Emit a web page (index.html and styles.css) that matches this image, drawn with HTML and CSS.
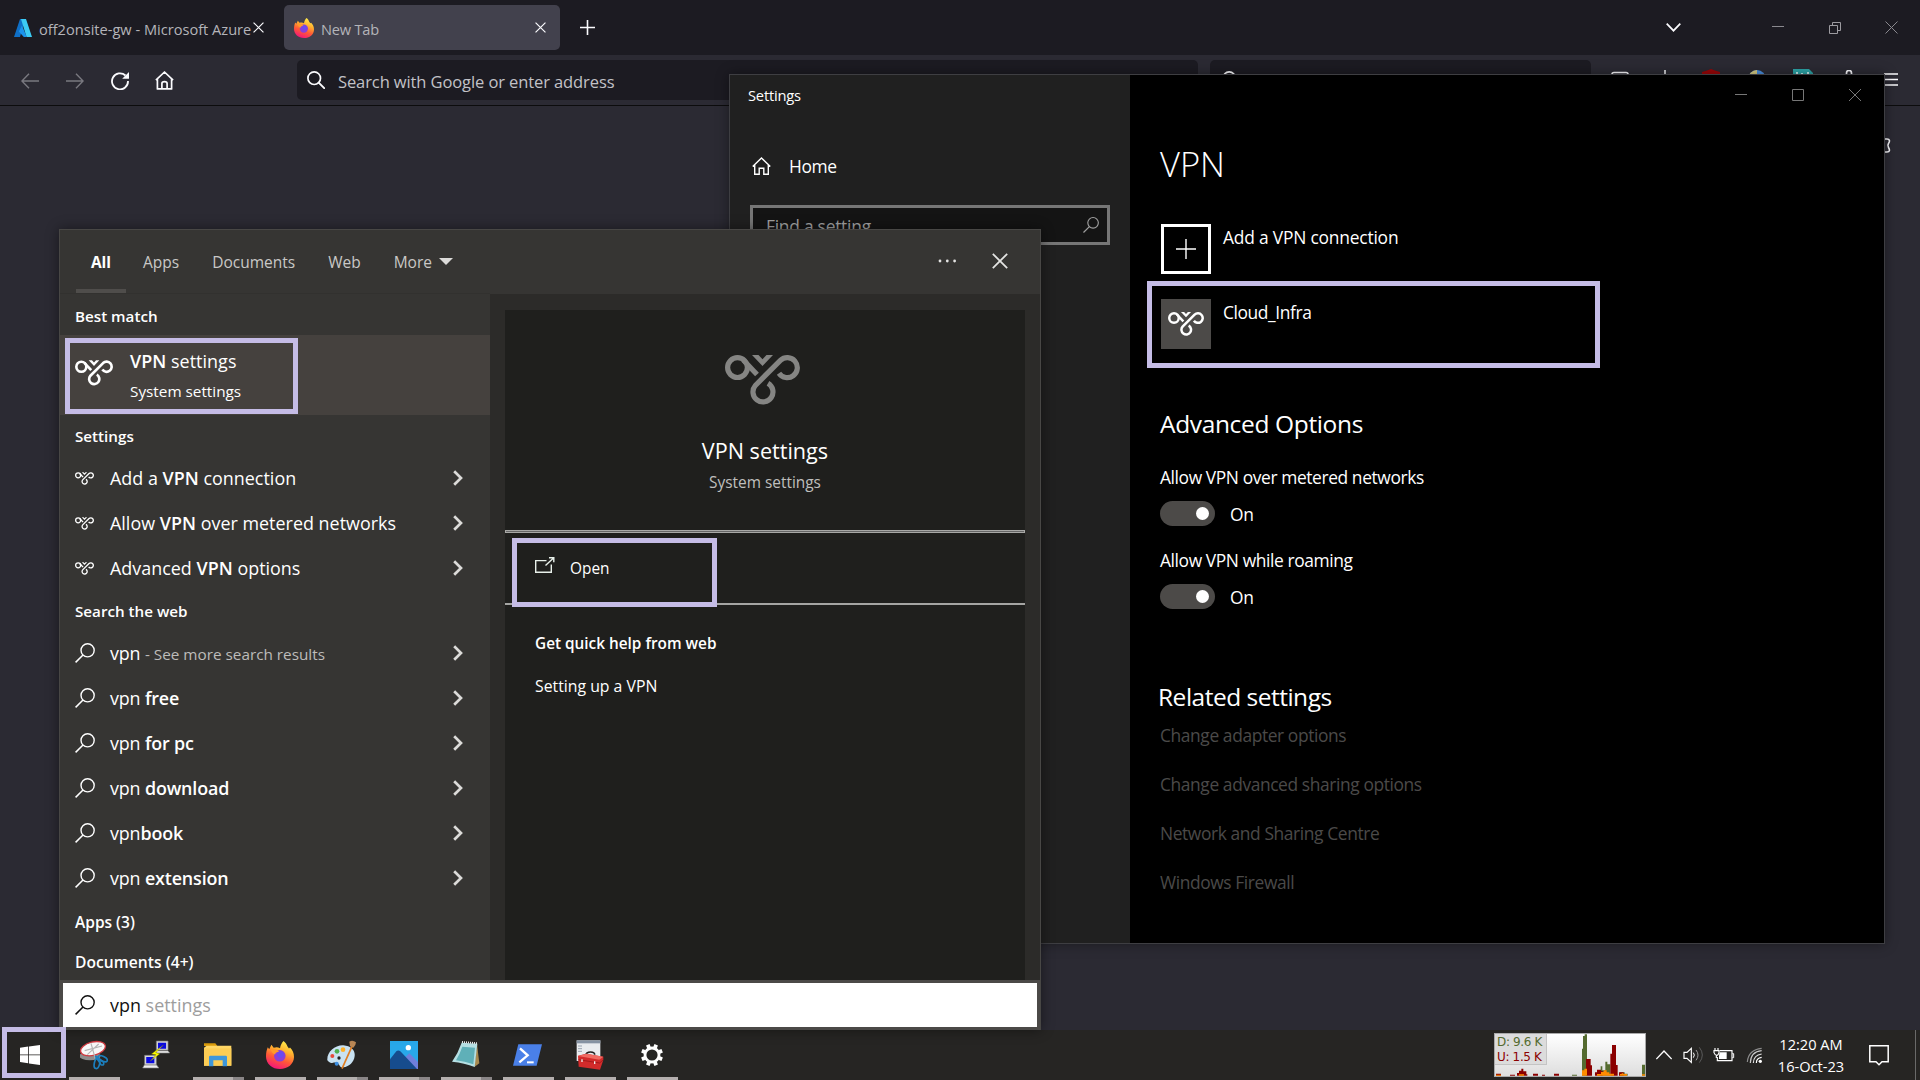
FILE: index.html
```html
<!DOCTYPE html>
<html lang="en">
<head>
<meta charset="utf-8">
<title>Desktop</title>
<link rel="stylesheet" href="styles.css">
</head>
<body>
<svg class="defs" aria-hidden="true">
  <symbol id="vpn" viewBox="0 0 75 50">
    <g fill="none" stroke="currentColor" stroke-width="5.2">
      <circle cx="12.5" cy="12.6" r="9.9"/>
      <path d="M18.5 5.2 32 19.500"/>
      <path d="M54 18.2A10 10 0 1 0 55.4 5.4L30.4 30.4A10 10 0 1 0 43 28.300"/>
    </g>
    <path fill="currentColor" d="M27 0h6.500l4 4.300 4-4.300H48L37.500 11z"/>
  </symbol>
  <symbol id="search" viewBox="0 0 20 20">
    <circle cx="12.600" cy="7.300" r="6.600" fill="none" stroke="currentColor" stroke-width="1.400"/>
    <path d="M8 12 .6 19.400" fill="none" stroke="currentColor" stroke-width="1.500"/>
  </symbol>
  <symbol id="chev" viewBox="0 0 10 16">
    <path d="M1.200 1.200 8 8l-6.800 6.800" fill="none" stroke="currentColor" stroke-width="2.700"/>
  </symbol>
  <symbol id="close" viewBox="0 0 12 12">
    <path d="M.6.6l10.800 10.800M11.400.6.6 11.400" fill="none" stroke="currentColor" stroke-width="1.300"/>
  </symbol>
  <symbol id="glass" viewBox="0 0 18 18">
    <circle cx="7.200" cy="7.200" r="6.300" fill="none" stroke="currentColor" stroke-width="1.700"/>
    <path d="m11.700 11.700 5.500 5.500" stroke="currentColor" stroke-width="1.900" stroke-linecap="round"/>
  </symbol>
  <linearGradient id="fxg" x1=".75" y1="0" x2=".35" y2="1">
    <stop offset="0" stop-color="#fff44f"/><stop offset=".35" stop-color="#ffb02e"/>
    <stop offset=".65" stop-color="#ff5a36"/><stop offset="1" stop-color="#f4157a"/>
  </linearGradient>
  <symbol id="firefox" viewBox="0 0 28 28">
    <path fill="url(#fxg)" d="M17.500 0c2 1.500 3.300 3.500 4 5.600l1.500 1.800 1-.8c2.600 2.700 4 5.800 4 9.400C28 23 21.800 28 14 28S0 22.600 0 15.400c0-3.800.7-6.800 1.800-9.200l1.400 2L5.400 3.700l2.300 3.100C10 6 12 6 14 7.200c.6-3 1.600-5.400 3.500-7.200z"/>
    <circle cx="13.800" cy="14.800" r="5.800" fill="#8b3fd8"/>
    <path fill="#ff9a2a" d="M4.500 8.500c3.500-1 6.500 0 8.700 2.200-2.300 0-3.700 1-4.200 2.800L6.500 12z"/>
    <circle cx="14.600" cy="13.500" r="3.200" fill="#6a4bf0"/>
  </symbol>
</svg>

<div class="desktop">
  <!-- Browser -->
  <section class="browser">
    <div class="tabs">
      <div class="tab">
        <svg width="18" height="18" viewBox="0 0 18 18"><path fill="#0f6fc6" d="M6 0h5L6 18H0z"/><path fill="#3ccbf4" d="M7 0h5l6 18h-5.500z"/><path fill="#1b93eb" d="M8 6.500 4.800 12.500l5 5.500h3z"/></svg>
        <span class="tab-title first">off2onsite-gw - Microsoft Azure</span>
        <svg class="x1" width="11" height="11"><use href="#close"/></svg>
      </div>
      <div class="tab active">
        <svg width="20" height="20"><use href="#firefox"/></svg>
        <span class="tab-title">New Tab</span>
        <svg class="x2" width="11" height="11"><use href="#close"/></svg>
      </div>
      <svg class="newtab" width="15" height="15" viewBox="0 0 15 15"><path d="M7.500 0v15M0 7.500h15" stroke="#fbfbfe" stroke-width="1.600"/></svg>
      <div class="winctl">
        <svg width="15" height="9" viewBox="0 0 15 9"><path d="M.7.700l6.800 7 6.800-7" fill="none" stroke="#fbfbfe" stroke-width="1.700"/></svg>
        <svg class="c-min" width="12" height="12" viewBox="0 0 12 12"><path d="M0 4.500h12" stroke="#8a898f"/></svg>
        <svg class="c-max" width="12" height="12" viewBox="0 0 12 12"><path d="M.5 3.500h8v8h-8zM3.500 3.500v-3h8v8h-3" fill="none" stroke="#9c9ba0"/></svg>
        <svg class="c-x" width="13" height="13" viewBox="0 0 13 13"><path d="M.5.500l12 12M12.500.500l-12 12" stroke="#8a898f"/></svg>
      </div>
    </div>
    <div class="toolbar">
      <svg class="dim" width="18" height="16" viewBox="0 0 18 16"><path d="M18 8H1M8 .8.900 8 8 15.200" fill="none" stroke="currentColor" stroke-width="1.400"/></svg>
      <svg class="dim t-fwd" width="18" height="16" viewBox="0 0 18 16"><path d="M0 8h17M10 .8 17.100 8 10 15.200" fill="none" stroke="currentColor" stroke-width="1.400"/></svg>
      <svg class="t-rel" width="18" height="18" viewBox="0 0 18 18"><path d="M14.500 3.500A8 8 0 1 0 17 9" fill="none" stroke="currentColor" stroke-width="1.800"/><path d="M18 0v6.800h-6.800z" fill="currentColor"/></svg>
      <svg class="t-home" width="19" height="19" viewBox="0 0 19 19"><path d="M.9 9.200 9.500 1l8.600 8.200M2.400 8v9.900h14.200V8M6.900 17.500v-5c0-2.400 5.200-2.400 5.200 0v5" fill="none" stroke="currentColor" stroke-width="1.700" stroke-linejoin="round"/></svg>
      <div class="url"><svg width="18" height="18"><use href="#glass"/></svg><span>Search with Google or enter address</span></div>
      <div class="sbar"><svg width="18" height="18"><use href="#glass"/></svg></div>
      <div class="exts">
        <svg width="18" height="18" viewBox="0 0 18 18"><rect x="1" y="2.500" width="16" height="12" rx="2" fill="none" stroke="#fbfbfe" stroke-width="1.700"/></svg>
        <svg width="18" height="18" viewBox="0 0 18 18"><path d="M9 0v14M3 9l6 6 6-6" fill="none" stroke="#fbfbfe" stroke-width="1.500"/></svg>
        <svg width="20" height="20" viewBox="0 0 20 20"><path d="M10 0l4 1.600L19 3v9l-9 8-9-8V3l5-1.400z" fill="#9a0508"/></svg>
        <svg width="18" height="18" viewBox="0 0 18 18"><circle cx="9" cy="9" r="9" fill="#4a90e2"/><path d="M9 0v9H0A9 9 0 0 1 9 0z" fill="#d9cf86"/></svg>
        <svg width="20" height="20" viewBox="0 0 20 20"><path d="M0 0h16l4 4v16H0z" fill="#2da5a8"/><path d="M4 3v3M9 4v2M15 3v3" stroke="#e8ffff" stroke-width="1.600"/></svg>
        <svg width="18" height="18" viewBox="0 0 18 18"><path d="M6.500 6V3a2.500 2.500 0 0 1 5 0v3" fill="none" stroke="#fbfbfe" stroke-width="1.700"/></svg>
        <svg class="burger" width="14" height="13" viewBox="0 0 14 13"><path d="M0 1h14M0 6.500h14M0 12h14" stroke="#fbfbfe" stroke-width="1.600"/></svg>
      </div>
    </div>
    <div class="page">
      <svg width="22" height="15" viewBox="0 0 22 15"><path d="M10 1h8c3 0 3 2.500 1.500 4.500-1 1.500-1 2.500 0 4C21 12 21 14 18 14h-8" fill="none" stroke="#fbfbfe" stroke-width="1.600"/></svg>
    </div>
  </section>

  <!-- Settings window -->
  <section class="settings">
    <aside class="s-nav">
      <div class="s-title">Settings</div>
      <div class="s-home"><svg width="19" height="18" viewBox="0 0 19 18"><path d="M.7 9.500 9.500 1l8.800 8.500M2.700 8v9.300h4.500v-6h4.600v6h4.500V8" fill="none" stroke="#fff" stroke-width="1.400"/></svg><span>Home</span></div>
      <div class="s-find"><span>Find a setting</span><svg width="16" height="16"><use href="#search"/></svg></div>
    </aside>
    <div class="s-main">
      <div class="s-ctl">
        <svg width="12" height="12" viewBox="0 0 12 12"><path d="M0 5.500h12" stroke="#777"/></svg>
        <svg width="12" height="12" viewBox="0 0 12 12"><path d="M.5.500h11v11H.5z" fill="none" stroke="#777"/></svg>
        <svg width="12" height="12" viewBox="0 0 12 12"><path d="M0 0l12 12M12 0 0 12" stroke="#777"/></svg>
      </div>
      <h1>VPN</h1>
      <div class="conn add"><div class="box"><svg width="20" height="20" viewBox="0 0 20 20"><path d="M10 0v20M0 10h20" stroke="#fff" stroke-width="1.400"/></svg></div><span>Add a VPN connection</span></div>
      <div class="conn cloud"><div class="box"><svg width="36" height="24"><use href="#vpn"/></svg></div><span>Cloud_Infra</span><i class="mark"></i></div>
      <h2>Advanced Options</h2>
      <div class="opt"><p>Allow VPN over metered networks</p><div class="sw"><b></b><span>On</span></div></div>
      <div class="opt"><p>Allow VPN while roaming</p><div class="sw"><b></b><span>On</span></div></div>
      <h2 class="rel">Related settings</h2>
      <ul class="links"><li>Change adapter options</li><li>Change advanced sharing options</li><li>Network and Sharing Centre</li><li>Windows Firewall</li></ul>
    </div>
  </section>

  <!-- Start search -->
  <section class="start">
    <header class="st-head">
      <div class="st-tab on">All</div><div class="st-tab">Apps</div><div class="st-tab">Documents</div><div class="st-tab">Web</div><div class="st-tab more">More <i></i></div>
      <div class="st-act">
        <svg width="19" height="4" viewBox="0 0 19 4"><g fill="#e4e4e3"><circle cx="2" cy="2" r="1.400"/><circle cx="9.300" cy="2" r="1.400"/><circle cx="16.600" cy="2" r="1.400"/></g></svg>
        <svg width="16" height="16"><use href="#close"/></svg>
      </div>
    </header>
    <div class="st-body">
      <div class="results">
        <h3 class="h-best">Best match</h3>
        <div class="best">
          <svg width="38" height="26"><use href="#vpn"/></svg>
          <div><p><b>VPN</b> settings</p><small>System settings</small></div>
          <i class="mark"></i>
        </div>
        <h3 class="h-set">Settings</h3>
        <div class="row"><svg class="v" width="19" height="13"><use href="#vpn"/></svg><span>Add a <b>VPN</b> connection</span><svg class="ch" width="10" height="16"><use href="#chev"/></svg></div>
        <div class="row"><svg class="v" width="19" height="13"><use href="#vpn"/></svg><span>Allow <b>VPN</b> over metered networks</span><svg class="ch" width="10" height="16"><use href="#chev"/></svg></div>
        <div class="row"><svg class="v" width="19" height="13"><use href="#vpn"/></svg><span>Advanced <b>VPN</b> options</span><svg class="ch" width="10" height="16"><use href="#chev"/></svg></div>
        <h3 class="h-web">Search the web</h3>
        <div class="row web first"><svg width="20" height="20"><use href="#search"/></svg><span>vpn <small>- See more search results</small></span><svg class="ch" width="10" height="16"><use href="#chev"/></svg></div>
        <div class="row web"><svg width="20" height="20"><use href="#search"/></svg><span>vpn <b>free</b></span><svg class="ch" width="10" height="16"><use href="#chev"/></svg></div>
        <div class="row web"><svg width="20" height="20"><use href="#search"/></svg><span>vpn <b>for pc</b></span><svg class="ch" width="10" height="16"><use href="#chev"/></svg></div>
        <div class="row web"><svg width="20" height="20"><use href="#search"/></svg><span>vpn <b>download</b></span><svg class="ch" width="10" height="16"><use href="#chev"/></svg></div>
        <div class="row web"><svg width="20" height="20"><use href="#search"/></svg><span>vpn<b>book</b></span><svg class="ch" width="10" height="16"><use href="#chev"/></svg></div>
        <div class="row web"><svg width="20" height="20"><use href="#search"/></svg><span>vpn <b>extension</b></span><svg class="ch" width="10" height="16"><use href="#chev"/></svg></div>
        <h3 class="h-apps">Apps (3)</h3>
        <h3 class="h-docs">Documents (4+)</h3>
      </div>
      <div class="detail">
        <div class="hero"><svg width="75" height="50"><use href="#vpn"/></svg><p>VPN settings</p><small>System settings</small></div>
        <div class="dbl"></div>
        <div class="open">
          <svg width="20" height="16" viewBox="0 0 20 16"><path d="M11.500 3.600H.7v11.700h15.600V7.500M10.500 8.500l7.800-7.300M14 .7h4.800v4.500" fill="none" stroke="#e8f0ea" stroke-width="1.400"/></svg><span>Open</span>
          <i class="mark"></i>
        </div>
        <h4>Get quick help from web</h4>
        <p class="help">Setting up a VPN</p>
      </div>
    </div>
    <div class="st-search"><svg width="20" height="20"><use href="#search"/></svg><span>vpn <em>settings</em></span></div>
  </section>

  <!-- Taskbar -->
  <footer class="taskbar">
    <div class="winbtn">
      <svg width="20" height="20" viewBox="0 0 20 20"><path fill="#fff" d="M0 2.800 8.200 1.600V9.500H0zM9 1.500 20 0v9.500H9zM0 10.300h8.200v8L0 17.100zM9 10.300h11V20L9 18.400z"/></svg>
      <i class="mark"></i>
    </div>
    <div class="apps">
      <div class="app run"><svg width="28" height="30" viewBox="30 18 84 90"><ellipse cx="60" cy="66" rx="32" ry="13" fill="#8d8d8d"/><ellipse cx="69" cy="44" rx="38" ry="20" transform="rotate(-14 69 44)" fill="#f8f8f8" stroke="#cf3a40" stroke-width="4"/><path d="M44 50 96 36M63 28l14 50M52 62l34-32" stroke="#b5b5b5" stroke-width="3.500"/><g fill="none" stroke="#1c7fbd" stroke-width="5"><ellipse cx="98" cy="74" rx="15" ry="7" transform="rotate(25 98 74)"/><ellipse cx="81" cy="88" rx="8" ry="16" transform="rotate(12 81 88)"/><path d="M76 66l17 26q10 4 8-7z"/></g></svg></div>
      <div class="app"><svg width="28" height="30" viewBox="214 18 86 90"><g fill="#d8d8d8" stroke="#777" stroke-width="2"><path d="M258 20h36v28h-36zM222 64h36v30h-36z"/><path d="M256 50h38l5 7h-41zM221 94h38l7 9h-50z" fill="#f0f0f0"/></g><path d="M263 25h25v19h-25zM227 69h25v19h-25z" fill="#0a0ae0"/><path d="M280 32 243 60l14 2-18 20 30-23-13-3z" fill="#ffff00" stroke="#777700"/></svg></div>
      <div class="app run multi"><svg width="28" height="30" viewBox="402 20 84 84"><path d="M402 27h34l6 8h-40z" fill="#d99b0c"/><path d="M402 40l8-6h74v60h-82z" fill="#ffd766"/><path d="M402 42h82v52h-82z" fill="#fccd55"/><path d="M417 96V68q0-4 4-4h46q4 0 4 4v28h-13V78h-28v18z" fill="#3f97da"/></svg></div>
      <div class="app run"><svg width="28" height="28"><use href="#firefox"/></svg></div>
      <div class="app run multi"><svg width="30" height="30" viewBox="771 18 90 88"><path d="M772 78c-2-24 22-46 48-45 24 2 36 16 34 32-2 18-16 32-34 34-12 2-10-10-20-14-12-4-16 8-28-7z" fill="#c9e2f2"/><circle cx="801" cy="51" r="7" fill="#4db04f"/><circle cx="819" cy="46" r="7" fill="#ffb22c"/><circle cx="787" cy="65" r="6" fill="#e64b3c"/><circle cx="800" cy="88" r="6" fill="#3a8de0"/><circle cx="807" cy="71" r="5" fill="#222"/><path d="M846 36 816 103" stroke="#e07d22" stroke-width="5"/><path d="M838 22q10-6 20 2 0 8-8 16l-10-4z" fill="#b98755"/></svg></div>
      <div class="app run multi"><svg width="28" height="28" viewBox="960 21 84 84"><path d="M960 21h84v84h-84z" fill="#28a8ea"/><path d="M990 85l28-27 26 26v21h-54z" fill="#6f7fdb"/><path d="M960 76l19-24q6-5 12 0l50 53h-81z" fill="#164c8d"/><circle cx="1015" cy="41" r="8" fill="#fff"/></svg></div>
      <div class="app run multi"><svg width="28" height="28" viewBox="333 63 84 84"><path d="M408 72l7 58-16 12z" fill="#a88a50"/><path d="M362 68l47 3-8 70q-30-12-68-16 18-25 29-57z" fill="#b5dfe3"/><path d="M364 80l38 3-5 50q-26-9-52-12 12-20 19-41z" fill="#5fb0b8"/><path d="M363 66l46 4" stroke="#eee" stroke-width="6" stroke-dasharray="3 3"/></svg></div>
      <div class="app run"><svg width="29" height="22" viewBox="520 71 87 66"><path d="M536 72h71l-16 64h-71z" fill="#4a80e8"/><path d="M541 84l23 21-25 21" fill="none" stroke="#fff" stroke-width="7"/><path d="M562 126h20" stroke="#fff" stroke-width="6"/></svg></div>
      <div class="app run"><svg width="28" height="30" viewBox="704 60 84 90"><path d="M706 61h71v62h-71z" fill="#e9ecef"/><path d="M706 61h71v9h-71z" fill="#8794a4"/><path d="M710 78h12M710 86h12M710 94h12" stroke="#9aa4b0" stroke-width="3"/><path d="M734 106q0-10 14-10 12 0 12 8" fill="none" stroke="#222" stroke-width="5"/><path d="M710 107l24-6 52 9v10l-10 29-64-9z" fill="#d22b2b"/><path d="M710 108l64 11 12-9-50-9z" fill="#f06a62"/><path d="M711 119l64 10 10-9" fill="none" stroke="#8d1212" stroke-width="2"/><path d="M722 118v8M760 124v8" stroke="#eee" stroke-width="4"/></svg></div>
      <div class="app run"><svg width="24" height="24" viewBox="-12 -12 24 24"><circle r="7" fill="none" stroke="#fff" stroke-width="2.800"/><g stroke="#fff" stroke-width="3.800"><path d="M0-7.500V-11M0 7.500V11M7.500 0H11M-7.500 0H-11" transform="rotate(22.500)"/><path d="M0-7.500V-11M0 7.500V11M7.500 0H11M-7.500 0H-11" transform="rotate(67.500)"/></g></svg></div>
    </div>
    <div class="traffic">
      <svg width="150" height="42" viewBox="45 28 450 126">
        <path fill="#556b2f" d="M306 153V72h3V34h5v-5h7v124zM362 153v-28h5v12h9v-26h6v8h9v34zM486 153v-33h9v33zM276 153v-3h15v3zM420 153v-10h14v4h9v6z"/>
        <path fill="#8b0000" d="M318 153v-50h14v19h4v31zM391 153V87h5V61h12v60h5v32zM48 153v-6h15v6zM90 153v-3h15v3zM111 153v-8h6v-7h7v-6h6v8h9v9h3v4zM159 153v-6h15v6zM186 153v-3h9v3zM222 153v-6h15v6zM345 153v-10h6v-8h12v4h5v14zM417 153v-10h14v10z"/>
        <path fill="#ff8c00" d="M48 153v-3h15v3zM117 153v-4h15v4zM306 153v-16h7v-5h8v21zM351 153v-5h12v-6h8v-5h9v6h8v4h14v6zM420 153v-5h5v-2h5v2h11v5zM486 153v-4h9v4z"/>
      </svg>
      <div class="rates"><span class="dn">D: 9.6 K</span><span class="up">U: 1.5 K</span></div>
    </div>
    <div class="tray">
      <svg width="16" height="12" viewBox="528 72 48 36"><path d="M529 102l23-24 23 24" fill="none" stroke="#fff" stroke-width="4"/></svg>
      <svg class="vol" width="22" height="18" viewBox="610 63 66 54"><path d="M613 82h9l13-12v42l-13-12h-9z" fill="none" stroke="#fff" stroke-width="3.500"/><path d="M641 83q6 7 0 15" fill="none" stroke="#fff" stroke-width="3"/><path d="M649 75q12 15 0 31" fill="none" stroke="#999" stroke-width="3"/><path d="M659 67q18 23 0 46" fill="none" stroke="#5a5a5a" stroke-width="3"/></svg>
      <svg class="bat" width="22" height="16" viewBox="700 66 66 48"><path d="M720 77h37v30h-44V96" fill="none" stroke="#fff" stroke-width="3.500"/><path d="M758 86h4v12h-4" fill="none" stroke="#fff" stroke-width="3"/><path d="M720 82h21v20h-23V92z" fill="#fff"/><path d="M703 77h15v6q-2 8-7 8t-8-8zM706 69v8M715 69v8M710 91v8" fill="none" stroke="#fff" stroke-width="3.500"/></svg>
      <svg class="wifi" width="17" height="17" viewBox="798 66 51 51"><circle cx="841" cy="109" r="5" fill="#fff"/><g fill="none" stroke-width="3.500"><path d="M829 114q0-15 16-17" stroke="#fff"/><path d="M820 114q1-24 25-27" stroke="#e0e0e0"/><path d="M811 114q1-34 34-37" stroke="#ccc"/><path d="M802 111q3-37 43-41" stroke="#8c8c8c"/></g></svg>
      <div class="clock"><span>12:20 AM</span><span>16-Oct-23</span></div>
      <svg class="note" width="20" height="21" viewBox="0 0 20 21"><path d="M.8.800h18.400v16H13l-3 3-3-3H.8z" fill="none" stroke="#fff" stroke-width="1.500"/></svg>
      <i class="peek"></i>
    </div>
  </footer>
</div>
</body>
</html>
```

FILE: styles.css
```css
* { box-sizing: border-box; }
body {
  margin: 0;
  overflow: hidden;
  font-family: "Open Sans", "Noto Sans", sans-serif;
  color: #fff;
}
h1, h2, h3, h4, p, ul { margin: 0; padding: 0; font-weight: 400; }
li { list-style: none; }
b { font-weight: 600; }
svg { display: block; flex: none; }
span, small, p, li, h1, h2, h3, h4 { white-space: nowrap; }
.defs { position: absolute; width: 0; height: 0; }
.desktop { position: relative; width: 1920px; height: 1080px; background: #2b2a33; overflow: hidden; }
.mark { position: absolute; border: 5px solid #c5bce6; }

/* Browser */
.browser { display: flex; flex-direction: column; height: 1030px; }
.tabs { display: flex; align-items: center; height: 55px; background: #1c1b22; }
.tab { display: flex; align-items: center; width: 284px; height: 45px; padding-left: 14px; color: #b4b4b9; font-size: 14.600px; }
.tab.active { width: 276px; padding-left: 10px; background: #42414d; border-radius: 5px; }
.tab-title { margin: 2px 0 0 7px; }
.tab-title.first { width: 214px; }
.tab.active .tab-title { letter-spacing: -.2px; }
.tab svg use { color: #fbfbfe; }
.x2 { margin-left: auto; margin-right: 14px; }
.newtab { margin-left: 20px; }
.winctl { display: flex; align-items: center; margin-left: auto; margin-right: 22px; }
.c-min { margin-left: 91px; }
.c-max { margin-left: 45px; }
.c-x { margin-left: 44px; }
.toolbar { display: flex; align-items: center; height: 51px; padding-left: 21px; border-bottom: 1px solid #0c0c0d; color: #fbfbfe; }
.dim { color: #7a7980; margin-top: 2px; }
.t-fwd { margin-left: 27px; }
.t-rel { margin-left: 27px; margin-top: 1px; }
.t-home { margin-left: 26px; }
.url { display: flex; align-items: center; width: 901px; height: 40px; margin-left: 123px; padding-left: 10px; background: #1c1b22; border-radius: 5px; color: #c2c2c7; font-size: 16.500px; letter-spacing: -.1px; }
.url svg, .sbar svg { color: #fbfbfe; }
.url span { margin: 3px 0 0 13px; }
.sbar { display: flex; align-items: center; width: 381px; height: 40px; margin-left: 12px; padding-left: 12px; background: #1c1b22; border-radius: 5px; }
.exts { display: flex; align-items: center; margin: -2px 0 0 20px; gap: 27px; }
.burger { margin: 1px 0 0 -1px; }
.page { display: flex; justify-content: flex-end; padding: 32px 29px 0 0; }

/* Settings window */
.settings { position: absolute; left: 729px; top: 74px; width: 1156px; height: 870px; display: flex; border: 1px solid #3e3e42; background: #000; box-shadow: 0 0 12px rgba(0, 0, 0, .4); font-size: 17.400px; letter-spacing: -.4px; }
.s-nav { width: 400px; background: #202020; padding: 0 20px; }
.s-title { height: 40px; margin-left: -2px; line-height: 40px; font-size: 14.700px; letter-spacing: -.2px; }
.s-home { display: flex; align-items: center; gap: 18px; height: 30px; margin: 36px 0 24px 2px; }
.s-find { display: flex; align-items: center; justify-content: space-between; width: 360px; height: 40px; padding: 0 8px 0 13px; border: 3px solid #767676; background: #141414; color: #a0a0a0; }
.s-find span { margin-top: 1px; letter-spacing: -.25px; }
.s-main { width: 754px; padding-left: 30px; }
.s-ctl { display: flex; align-items: center; justify-content: flex-end; gap: 45px; height: 40px; padding-right: 23px; }
.s-main h1 { height: 60px; margin-top: 19px; line-height: 60px; font-size: 34.500px; font-weight: 300; letter-spacing: 0; }
.conn { position: relative; display: flex; gap: 12px; height: 50px; line-height: 27px; }
.add { margin: 30px 0 25px 1px; letter-spacing: -.2px; }
.cloud { margin-left: 1px; }
.box { display: flex; align-items: center; justify-content: center; width: 50px; height: 50px; border: 3px solid #fff; }
.cloud .box { border: 0; background: #4c4a48; }
.cloud .mark { left: -14px; top: -18px; width: 453px; height: 87px; }
.s-main h2 { height: 40px; margin-top: 55px; line-height: 40px; font-size: 24.500px; letter-spacing: -.35px; }
.opt { height: 83px; padding-top: 19px; }
.s-main h2 + .opt { margin-top: 0; }
.opt p { height: 28px; line-height: 28px; }
.sw { display: flex; align-items: center; gap: 15px; height: 25px; margin-top: 10px; }
.sw b { display: flex; width: 55px; height: 25px; padding: 6px; justify-content: flex-end; border-radius: 13px; background: #4c4a48; }
.sw b::before { content: ""; width: 13px; height: 13px; border-radius: 50%; background: #fff; }
.s-main h2.rel { margin: 69px 0 0 -2px; height: 35px; line-height: 35px; letter-spacing: -.5px; }
.links li { height: 49px; line-height: 42px; color: #4b4a49; }

/* Start search */
.start { position: absolute; left: 59px; top: 229px; width: 982px; height: 801px; display: flex; flex-direction: column; border: 1px solid #484745; border-bottom: 0; background: #373533; box-shadow: 0 0 12px rgba(0, 0, 0, .45); }
.st-head { display: flex; height: 64px; padding-left: 16px; background: #363533; font-size: 15.500px; color: #c9c8c6; }
.st-tab { margin-right: 33px; line-height: 64px; }
.st-tab.on { width: 50px; margin-right: 17px; border-bottom: 5px solid #4f4d4b; color: #fff; font-weight: 700; text-align: center; }
.st-tab.more { display: flex; align-items: center; gap: 7px; height: 63px; }
.more i { margin-top: -1px; border: 7px solid transparent; border-top: 7px solid #dcdbd9; border-bottom: 0; }
.st-act { display: flex; align-items: center; gap: 35px; height: 62px; margin-left: auto; padding-right: 32px; color: #e4e4e3; }
.st-body { display: flex; height: 686px; background: #2c2b29; }
.results { width: 430px; background: #363533; box-shadow: 0 -1px #32312f; }
.results h3 { display: flex; align-items: center; padding-left: 15px; font-size: 15.200px; font-weight: 600; }
.results h3.h-best { height: 41px; padding-top: 2px; }
.best { position: relative; display: flex; align-items: center; gap: 17px; height: 80px; padding: 2px 0 0 15px; background: #45413e; }
.best svg { margin-top: -7px; }
.best p { height: 30px; line-height: 30px; font-size: 17.900px; letter-spacing: .05px; }
.best small { display: block; height: 30px; line-height: 30px; font-size: 15.300px; }
.best .mark { left: 5px; top: 3px; width: 233px; height: 76px; }
.results h3.h-set { height: 40px; padding-top: 2px; }
.row { display: flex; align-items: center; height: 45px; padding: 0 27px 0 15px; font-size: 17.900px; letter-spacing: .02px; }
.row span { margin-left: 15px; }
.row .v { margin-top: 2px; }
.row .v + span { margin-left: 16px; }
.row small { font-size: 15.300px; letter-spacing: 0; color: #bdbcba; }
.row .ch { margin-left: auto; color: #dcdbd9; }
.row.web { letter-spacing: -.15px; }
.row.first small { letter-spacing: 0; }
.row.first { margin-bottom: 0; }
.results h3.h-web { height: 41px; padding-bottom: 0; }
.row.web span, .row.web svg { margin-top: -1px; }
.results h3.h-apps { height: 41px; font-size: 15.500px; }
.results h3.h-docs { height: 38px; padding-top: 2px; font-size: 15.600px; letter-spacing: .05px; }
.detail { width: 520px; margin: 16px 0 0 15px; background: #1f1f1d; }
.hero { display: flex; flex-direction: column; align-items: center; height: 220px; padding-top: 45px; }
.hero svg { color: #858583; margin-right: 5px; }
.hero p { height: 36px; margin-top: 28px; line-height: 36px; font-size: 21.600px; }
.hero small { height: 28px; line-height: 28px; font-size: 15.400px; color: #bfbfbd; }
.dbl { height: 3px; border: solid #a8a8a6; border-width: 1px; background: #666; }
.open { position: relative; display: flex; align-items: center; height: 72px; gap: 15px; padding: 0 0 3px 30px; border-bottom: 2px solid #a5a5a3; font-size: 15.400px; }
.open svg { margin-top: -4px; }
.open span { margin-top: 4px; }
.open .mark { left: 7px; top: 5px; width: 205px; height: 69px; }
.detail h4 { margin: 23px 0 0 30px; height: 30px; line-height: 30px; font-size: 15.350px; font-weight: 600; }
.help { margin: 13px 0 0 30px; height: 30px; line-height: 30px; font-size: 15.800px; }
.st-search { display: flex; align-items: center; gap: 15px; height: 50px; padding-left: 12px; border: 3px solid #4b4947; background: #fff; color: #111; font-size: 17.900px; letter-spacing: .02px; }
.st-search em { font-style: normal; color: #9d9d9d; }

/* Taskbar */
.taskbar { display: flex; height: 50px; background: #262523; }
.winbtn { position: relative; width: 64px; padding: 15px 0 0 20px; }
.winbtn .mark { left: 2px; top: -3px; width: 64px; height: 51px; }
.apps { display: flex; }
.app { display: flex; align-items: center; justify-content: center; width: 62px; height: 50px; padding-right: 3px; }
.app.run { background: linear-gradient(#b4afae, #b4afae) 5px 47px / 51px 3px no-repeat; }
.app.multi { background: linear-gradient(90deg, #b4afae 40px, #8a8687 40px) 5px 47px / 51px 3px no-repeat; }
.traffic { position: relative; width: 152px; height: 44px; margin: 3px 0 0 810px; border: 1px solid #aaa; background: linear-gradient(#fff, #dedede); }
.rates { position: absolute; left: 0; top: 0; display: flex; flex-direction: column; width: 52px; height: 31px; padding: 1px 0 0 2px; border: solid #c4c4c4; border-width: 0 1px 1px 0; background: #dcdcdc; font: 12px/15px "DejaVu Sans", sans-serif; letter-spacing: -.35px; }
.dn { color: #556b2f; }
.up { color: #8b0000; }
.tray { display: flex; align-items: center; flex: 1; padding-left: 10px; }
.vol { margin-left: 11px; }
.bat { margin-left: 8px; }
.wifi { margin-left: 11px; }
.clock { display: flex; flex-direction: column; align-items: center; width: 70px; margin: -1px 0 0 13px; line-height: 22px; font-size: 14.600px; }
.note { margin-left: 23px; }
.peek { width: 1px; height: 50px; margin-left: 26px; background: #6a6a69; }
```
